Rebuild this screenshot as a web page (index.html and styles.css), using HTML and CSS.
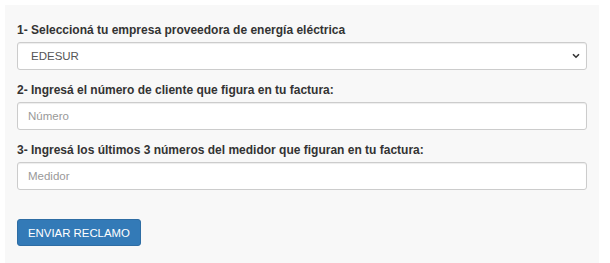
FILE: index.html
```html
<!DOCTYPE html>
<html lang="es">
<head>
<meta charset="utf-8">
<title>Reclamo</title>
<link rel="stylesheet" href="styles.css">
</head>
<body>
<form class="panel">
  <div class="form-group">
    <label class="label" for="empresa">1- Seleccioná tu empresa proveedora de energía eléctrica</label>
    <div class="select-wrap">
      <select id="empresa" class="control select">
        <option>EDESUR</option>
        <option>EDENOR</option>
      </select>
      <svg class="chevron" width="8" height="6" viewBox="0 0 8 6"><path d="M1 1.2 L4 4.2 L7 1.2" fill="none" stroke="#333" stroke-width="1.6"/></svg>
    </div>
  </div>
  <div class="form-group">
    <label class="label" for="numero">2- Ingresá el número de cliente que figura en tu factura:</label>
    <input id="numero" class="control" type="text" placeholder="Número">
  </div>
  <div class="form-group">
    <label class="label" for="medidor">3- Ingresá los últimos 3 números del medidor que figuran en tu factura:</label>
    <input id="medidor" class="control" type="text" placeholder="Medidor">
  </div>
  <div class="actions">
    <button type="button" class="btn">ENVIAR RECLAMO</button>
  </div>
</form>
</body>
</html>
```
FILE: styles.css
```css
html, body {
  margin: 0;
  padding: 0;
  background: #ffffff;
}
body {
  padding: 5px 11px 0 5px;
  font-family: "Liberation Sans", Arial, sans-serif;
  font-size: 11.2px;
  line-height: 16px;
  color: #333333;
}
.panel {
  display: flex;
  flex-direction: column;
  background: #f8f8f8;
  padding: 17px 12px 20px 12px;
  min-height: 240px;
  box-sizing: border-box;
}
.form-group {
  display: flex;
  flex-direction: column;
  margin-bottom: 12px;
}
.label {
  display: block;
  font-weight: bold;
  font-size: 12px;
  margin-bottom: 4px;
  line-height: 16px;
}
.control {
  display: block;
  box-sizing: border-box;
  width: 100%;
  height: 28px;
  margin: 0;
  padding: 4px 10px;
  font-family: "Liberation Sans", Arial, sans-serif;
  font-size: 11.5px;
  color: #555555;
  background: #ffffff;
  border: 1px solid #cccccc;
  border-radius: 3px;
  box-shadow: inset 0 1px 1px rgba(0,0,0,0.075);
  outline: none;
}
.control::placeholder {
  color: #999999;
}
.select-wrap {
  position: relative;
}
.select {
  -webkit-appearance: none;
  appearance: none;
  padding-left: 13px;
}
.chevron {
  position: absolute;
  right: 7px;
  top: 11px;
  pointer-events: none;
}
.actions {
  display: flex;
  padding-top: 17px;
}
.btn {
  box-sizing: border-box;
  height: 27px;
  padding: 4px 10px;
  font-family: "Liberation Sans", Arial, sans-serif;
  font-size: 11.4px;
  color: #ffffff;
  background: #337ab7;
  border: 1px solid #2e6da4;
  border-radius: 3px;
  cursor: pointer;
}
```
